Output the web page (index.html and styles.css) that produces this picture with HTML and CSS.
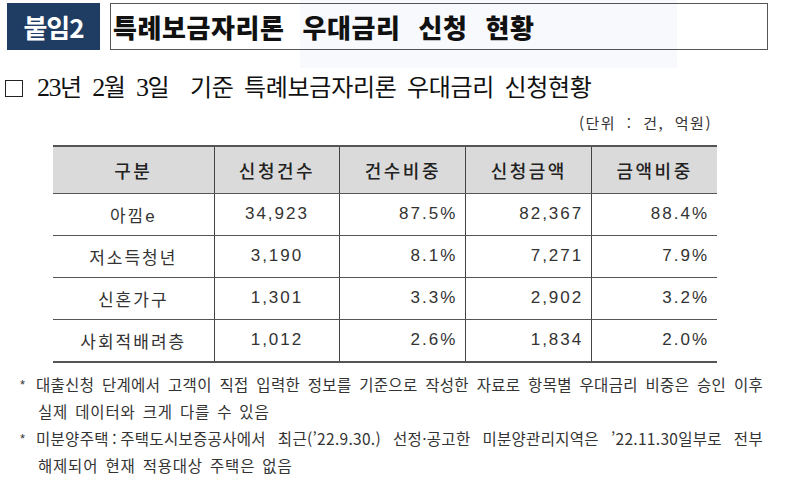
FILE: index.html
```html
<!DOCTYPE html>
<html lang="ko">
<head>
<meta charset="utf-8">
<link rel="stylesheet" href="styles.css">
</head>
<body>
<div class="page">
  <div class="ghost"></div>
  <div class="head">
    <div class="badge">붙임2</div>
    <div class="title">특례보금자리론 우대금리 신청 현황</div>
  </div>
  <div class="section">
    <span class="box"></span>
    <span class="stitle"><span class="num">23</span>년 <span class="num">2</span>월 <span class="num">3</span>일 &nbsp;기준 특례보금자리론 우대금리 신청현황</span>
  </div>
  <div class="unit">(단위 : 건, 억원)</div>
  <table class="tbl">
    <thead>
      <tr><th>구분</th><th>신청건수</th><th>건수비중</th><th>신청금액</th><th>금액비중</th></tr>
    </thead>
    <tbody>
      <tr><td class="c">아낌e</td><td class="c">34,923</td><td class="r">87.5%</td><td class="r">82,367</td><td class="r">88.4%</td></tr>
      <tr><td class="c">저소득청년</td><td class="c">3,190</td><td class="r">8.1%</td><td class="r">7,271</td><td class="r">7.9%</td></tr>
      <tr><td class="c">신혼가구</td><td class="c">1,301</td><td class="r">3.3%</td><td class="r">2,902</td><td class="r">3.2%</td></tr>
      <tr><td class="c">사회적배려층</td><td class="c">1,012</td><td class="r">2.6%</td><td class="r">1,834</td><td class="r">2.0%</td></tr>
    </tbody>
  </table>
  <div class="notes">
    <div class="note"><span class="star">*</span><div class="ntext"><div class="line just">대출신청 단계에서 고객이 직접 입력한 정보를 기준으로 작성한 자료로 항목별 우대금리 비중은 승인 이후</div><div class="line">실제 데이터와 크게 다를 수 있음</div></div></div>
    <div class="note"><span class="star">*</span><div class="ntext"><div class="line just">미분양주택&thinsp;:&thinsp;주택도시보증공사에서 최근(’22.9.30.) 선정·공고한 미분양관리지역은 ’22.11.30일부로 전부</div><div class="line">해제되어 현재 적용대상 주택은 없음</div></div></div>
  </div>
</div>
</body>
</html>
```
FILE: styles.css
```css
* { box-sizing: border-box; }
html, body { margin: 0; padding: 0; background: #fff; }
body { font-family: "Noto Sans CJK KR", "Noto Sans", sans-serif; color: #222; }
.page { position: relative; width: 800px; height: 484px; overflow: hidden; }
.ghost { position: absolute; left: 300px; top: 0; width: 377px; height: 68px; background: #f7f9fc; z-index: 0; }
.head { position: relative; z-index: 1; display: flex; gap: 10px; padding: 3px 0 0 7px; height: 50px; }
.badge { width: 93px; height: 47px; background: #1f3d63; color: #fff; font-weight: 700; font-size: 26px; display: flex; align-items: center; justify-content: center; letter-spacing: -1px; }
.title { width: 658px; height: 47px; border: 1px solid #555; background: transparent; font-weight: 900; font-size: 26px; color: #111; display: flex; align-items: center; padding-left: 2px; word-spacing: 10px; letter-spacing: 0.6px; }
.section { position: relative; z-index: 1; display: flex; align-items: center; gap: 14px; padding: 21px 0 0 5px; }
.box { width: 18px; height: 17px; border: 1px solid #222; flex: none; margin-top: 3px; }
.stitle { font-size: 24px; font-weight: 400; color: #111; letter-spacing: -0.3px; word-spacing: 4px; line-height: 30px; }
.num { font-family: "Liberation Serif", serif; font-size: 26px; letter-spacing: -1.5px; }
.unit { width: 712px; text-align: right; font-size: 15px; color: #333; margin-top: 9px; height: 22px; line-height: 22px; letter-spacing: 1.5px; word-spacing: 5px; }
.tbl { margin: 11px 0 0 53px; border-collapse: collapse; width: 664px; font-family: "Liberation Sans", "Noto Sans CJK KR", sans-serif; color: #333; font-size: 17px; letter-spacing: 2px; }
.tbl th, .tbl td { border-left: 1px solid #444; border-right: 1px solid #444; border-bottom: 1px solid #555; padding: 0 8px; }
.tbl th:first-child, .tbl td:first-child { border-left: none; width: 161px; }
.tbl th:last-child, .tbl td:last-child { border-right: none; }
.tbl th { background: #dadada; height: 47px; font-weight: 500; font-family: "Noto Sans CJK KR", sans-serif; font-size: 18px; letter-spacing: 2.5px; border-top: 2px solid #555; color: #222; }
.tbl td { height: 42px; }
.tbl tbody tr:last-child td { border-bottom: 2px solid #555; height: 43px; }
.tbl .c { text-align: center; }
.tbl .r { text-align: right; }
.notes { margin-top: 8px; font-size: 15.5px; color: #333; }
.note { display: flex; }
.star { width: 36px; padding-left: 20px; font-family: "Liberation Sans", sans-serif; font-size: 13px; line-height: 27px; }
.ntext { width: 727px; }
.line { line-height: 27px; height: 27px; white-space: nowrap; letter-spacing: 0.8px; word-spacing: 2px; }
.line.just { text-align: justify; text-align-last: justify; white-space: normal; overflow: hidden; letter-spacing: 0.3px; word-spacing: 0; }
.line:not(.just) { padding-left: 2px; }
```
